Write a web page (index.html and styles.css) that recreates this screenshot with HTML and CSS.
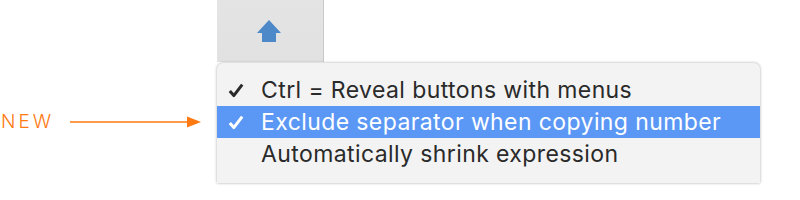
FILE: index.html
```html
<!DOCTYPE html>
<html>
<head>
<meta charset="utf-8">
<link rel="stylesheet" href="styles.css">
</head>
<body>
<div class="page">
  <div class="annot">
    <span class="new">NEW</span>
    <svg class="arrow" width="131" height="12" viewBox="0 0 131 12">
      <line x1="0" y1="6" x2="118" y2="6" stroke="#ff7a12" stroke-width="1.6"/>
      <polygon points="117,0.5 131,6 117,11.5" fill="#ff7a12"/>
    </svg>
  </div>
  <div class="stack">
    <div class="button">
      <svg class="up" width="24" height="22" viewBox="0 0 24 22">
        <polygon points="12,0 24,13 19,13 19,22 5,22 5,13 0,13" fill="#4d88c9"/>
      </svg>
    </div>
    <div class="menu">
      <div class="item">
        <svg class="check" width="16" height="15" viewBox="0 0 16 15"><path d="M1.8 8 L5.8 12.6 L14.2 1.6" fill="none" stroke="#2a2a2a" stroke-width="3" stroke-linejoin="round"/></svg>
        <span class="label">Ctrl = Reveal buttons with menus</span>
      </div>
      <div class="item selected">
        <svg class="check" width="16" height="15" viewBox="0 0 16 15"><path d="M1.8 8 L5.8 12.6 L14.2 1.6" fill="none" stroke="#ffffff" stroke-width="3" stroke-linejoin="round"/></svg>
        <span class="label">Exclude separator when copying number</span>
      </div>
      <div class="item">
        <span class="check"></span>
        <span class="label">Automatically shrink expression</span>
      </div>
    </div>
  </div>
</div>
</body>
</html>
```
FILE: styles.css
```css
html, body {
  margin: 0;
  padding: 0;
  background: #ffffff;
}
.page {
  display: grid;
  grid-template-columns: 217px 543px;
  width: 800px;
  height: 200px;
  overflow: hidden;
}
.annot {
  display: flex;
  align-items: center;
  padding-top: 110px;
  height: 23px;
}
.new {
  font-family: Inter, "Liberation Sans", sans-serif;
  font-weight: 300;
  font-size: 19px;
  color: #ff7a12;
  letter-spacing: 3px;
  margin-left: 1px;
  width: 69px;
}
.arrow {
  display: block;
  margin-top: 1px;
}
.stack {
  display: flex;
  flex-direction: column;
}
.button {
  width: 107px;
  height: 62px;
  background: linear-gradient(#e4e4e4, #e1e1e1);
  border-right: 1px solid #c9c9c9;
  box-sizing: border-box;
  display: flex;
  justify-content: center;
  padding-top: 20px;
  padding-right: 3px;
}
.up { display: block; }
.menu {
  margin-top: 1px;
  height: 120px;
  background: #f3f3f3;
  border-radius: 6px 6px 0 0;
  box-shadow: 0 0 3px rgba(0,0,0,0.35);
  padding-top: 11px;
  box-sizing: border-box;
}
.item {
  display: flex;
  align-items: center;
  height: 32px;
  font-family: Inter, "Liberation Sans", sans-serif;
  font-size: 23px;
  letter-spacing: 0.4px;
  color: #2a2a2a;
}
.item.selected {
  background: #5b97f5;
  color: #ffffff;
}
.check {
  display: block;
  width: 16px;
  height: 15px;
  margin-left: 11px;
  margin-right: 17px;
}
.label {
  white-space: nowrap;
}
```
